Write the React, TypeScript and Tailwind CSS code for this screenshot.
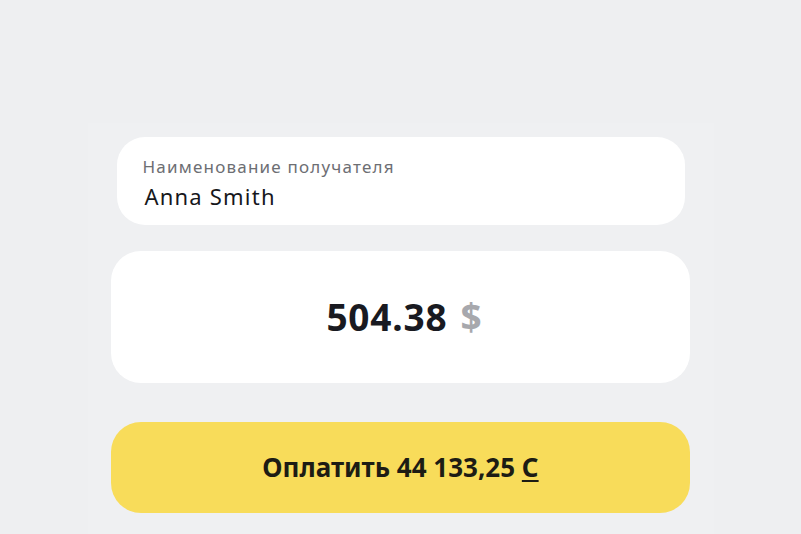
import React from "react";

const font = { fontFamily: "'Noto Sans', Lato, sans-serif" };

export default function App() {
  return (
    <div className="flex min-h-screen justify-center bg-[#eeeff1] pt-[123px]" style={font}>
      <div className="flex w-[626px] flex-col items-center bg-[#eff0f2] pt-[14px] pb-[22px]">
        {/* получатель */}
        <div className="flex h-[88px] w-[568px] flex-col justify-center rounded-[28px] bg-white pl-[26px] pr-[26px] pt-[3px]">
          <span className="text-[17px] leading-[22px] tracking-[1.2px] text-[#6d6e73]">Наименование получателя</span>
          <span className="ml-[2px] mt-[5px] text-[22px] leading-[26px] tracking-[1.2px] text-[#16171b]">Anna Smith</span>
        </div>

        {/* сумма */}
        <div className="mt-[26px] flex h-[132px] w-[579px] items-center justify-center rounded-[30px] bg-white pl-[7px]">
          <span className="text-[37px] font-bold tracking-[0.8px] text-[#191a21]">504.38</span>
          <span className="ml-[13px] text-[37px] font-bold text-[#a7a8ad]">$</span>
        </div>

        {/* кнопка */}
        <button
          type="button"
          className="mt-[39px] flex h-[91px] w-[579px] items-center justify-center rounded-[30px] bg-[#f8dc5a] text-[26px] font-bold text-[#1d1c14]"
        >
          Оплатить 44 133,25&nbsp;<span className="underline decoration-2 underline-offset-[3px]">С</span>
        </button>
      </div>
    </div>
  );
}
